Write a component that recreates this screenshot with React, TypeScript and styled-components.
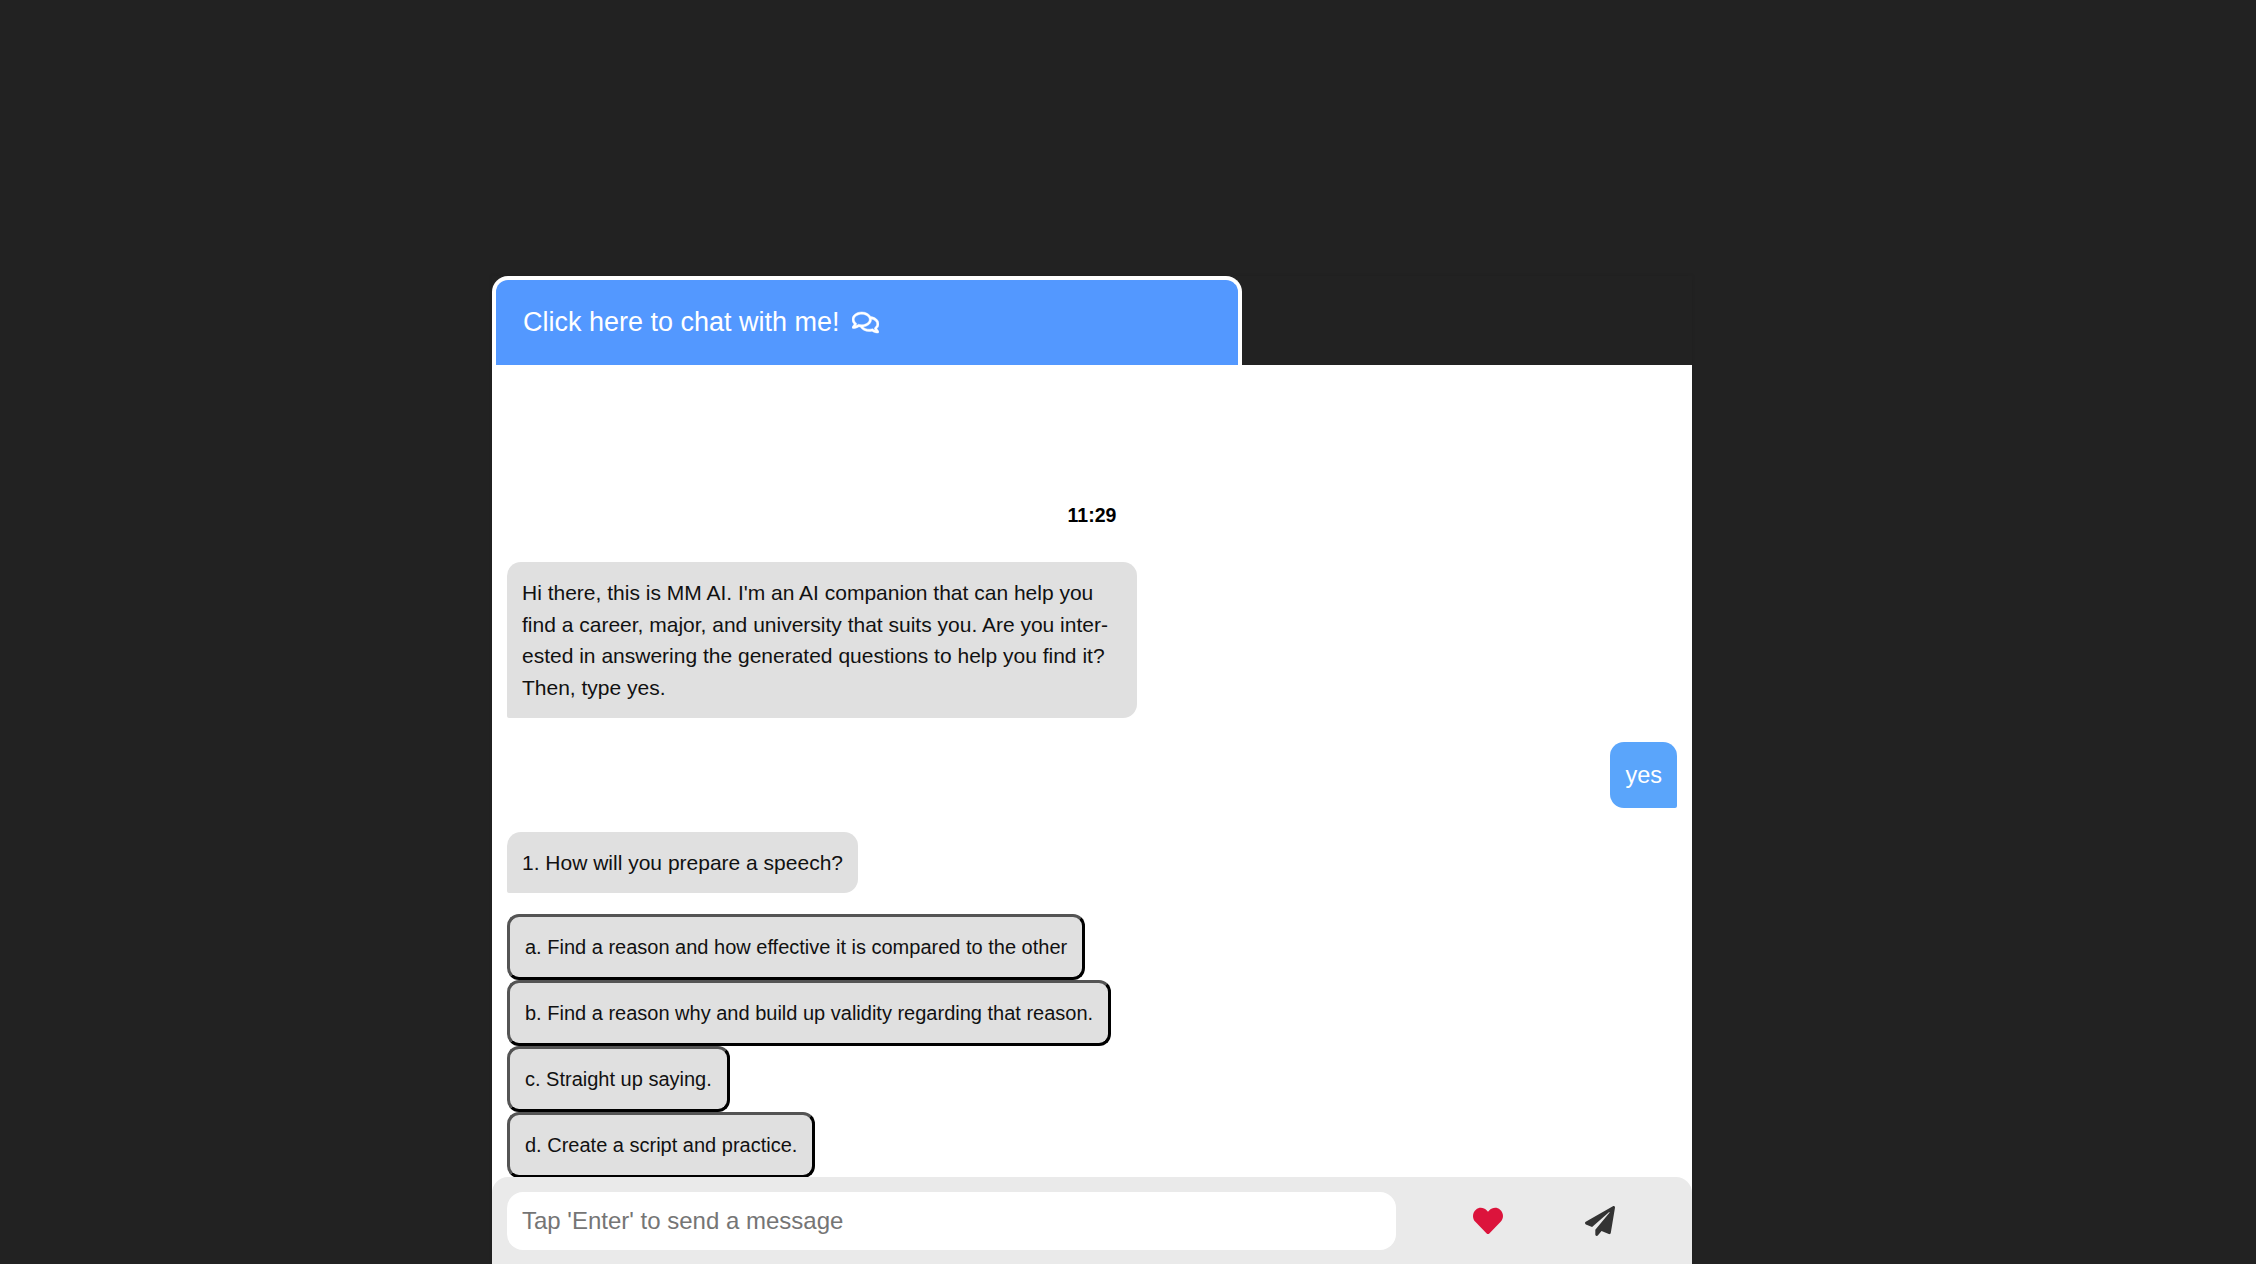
import React from 'react';
import styled, { createGlobalStyle } from 'styled-components';
import { FaHeart, FaPaperPlane, FaRegComments } from 'react-icons/fa';

const Global = createGlobalStyle`
  html, body { margin: 0; padding: 0; background: #222222; height: 100%; overflow: hidden; }
  * { box-sizing: border-box; }
  body { font-family: "Liberation Sans", Arial, sans-serif; }
`;

const Page = styled.div`
  width: 2256px;
  height: 1264px;
  padding: 276px 0 0 492px;
`;

const Widget = styled.section`
  width: 1200px;
  height: 988px;
  display: flex;
  flex-direction: column;
  box-shadow: 0 0 4px rgba(0, 0, 0, 0.08);
`;

const TabRow = styled.div`
  height: 89px;
  flex: none;
  display: flex;
`;

const Tab = styled.div`
  width: 750px;
  display: flex;
  align-items: center;
  gap: 12px;
  padding: 0 0 0 27px;
  background: #5398ff;
  color: #ffffff;
  font-size: 27px;
  border: 4px solid #ffffff;
  border-bottom: 0;
  border-radius: 16px 16px 0 0;
  svg { width: 27px; height: 27px; stroke-width: 10; }
`;

const Body = styled.div`
  height: 812px;
  flex: none;
  background: #ffffff;
  display: flex;
  flex-direction: column;
  align-items: flex-start;
  padding: 138px 15px 0;
`;

const Time = styled.div`
  align-self: center;
  font-size: 19.5px;
  font-weight: 700;
  line-height: 24px;
  color: #000000;
  margin-bottom: 35px;
`;

const Bubble = styled.div<{ $w?: number; $mb: number }>`
  background: #e0e0e0;
  color: #111111;
  font-size: 21px;
  line-height: 31.7px;
  padding: 15px 15px 14px;
  border-radius: 14px 14px 14px 2px;
  width: ${(p) => (p.$w ? `${p.$w}px` : 'auto')};
  margin-bottom: ${(p) => p.$mb}px;
`;

const Mine = styled.div`
  align-self: flex-end;
  background: #5aa5fb;
  color: #ffffff;
  font-size: 23.5px;
  line-height: 26px;
  padding: 20px 15px;
  height: 66px;
  border-radius: 14px 14px 2px 14px;
  margin-bottom: 24px;
`;

const Option = styled.button`
  display: block;
  height: 66px;
  padding: 2px 15px 0;
  background: #e0e0e0;
  color: #111111;
  font-family: inherit;
  font-size: 20px;
  border: 3px outset #000000;
  border-radius: 12px;
`;

const Options = styled.div`
  display: flex;
  flex-direction: column;
  align-items: flex-start;
`;

const FooterWell = styled.div`
  flex: 1;
  display: flex;
  background: #ffffff;
`;

const Footer = styled.footer`
  flex: 1;
  background: #eaeaea;
  border-radius: 16px 16px 0 0;
  display: flex;
  align-items: center;
  padding: 1px 15px 0;
`;

const Input = styled.input`
  width: 889px;
  height: 58px;
  flex: none;
  border: 0;
  outline: none;
  border-radius: 16px;
  background: #ffffff;
  padding: 0 15px;
  font-family: inherit;
  font-size: 24px;
  &::placeholder { color: #757575; opacity: 1; }
`;

const IconSlot = styled.div<{ $w: number; $color: string; $size: number }>`
  width: ${(p) => p.$w}px;
  flex: none;
  display: flex;
  justify-content: center;
  color: ${(p) => p.$color};
  svg { width: ${(p) => p.$size}px; height: ${(p) => p.$size}px; }
`;

const Intro = "Hi there, this is MM AI. I'm an AI companion that can help you find a career, major, and university that suits you. Are you inter\u00ADested in answering the generated questions to help you find it? Then, type yes.";

export default function App() {
  return (
    <Page>
      <Global />
      <Widget>
        <TabRow>
          <Tab>
            Click here to chat with me!
            <FaRegComments />
          </Tab>
        </TabRow>
        <Body>
          <Time>11:29</Time>
          <Bubble $w={630} $mb={24}>{Intro}</Bubble>
          <Mine>yes</Mine>
          <Bubble $mb={21}>1. How will you prepare a speech?</Bubble>
          <Options>
            <Option>a. Find a reason and how effective it is compared to the other</Option>
            <Option>b. Find a reason why and build up validity regarding that reason.</Option>
            <Option>c. Straight up saying.</Option>
            <Option>d. Create a script and practice.</Option>
          </Options>
        </Body>
        <FooterWell>
          <Footer>
            <Input placeholder="Tap 'Enter' to send a message" />
            <IconSlot $w={184} $color="#dc143c" $size={30}><FaHeart /></IconSlot>
            <IconSlot $w={40} $color="#333333" $size={30}><FaPaperPlane /></IconSlot>
          </Footer>
        </FooterWell>
      </Widget>
    </Page>
  );
}
